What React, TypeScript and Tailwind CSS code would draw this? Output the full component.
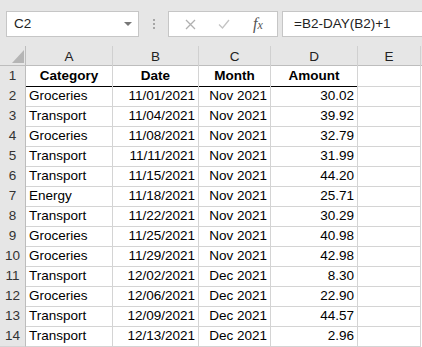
import React from "react";

const rows: [string, string, string, string][] = [
  ["Groceries", "11/01/2021", "Nov 2021", "30.02"],
  ["Transport", "11/04/2021", "Nov 2021", "39.92"],
  ["Groceries", "11/08/2021", "Nov 2021", "32.79"],
  ["Transport", "11/11/2021", "Nov 2021", "31.99"],
  ["Transport", "11/15/2021", "Nov 2021", "44.20"],
  ["Energy", "11/18/2021", "Nov 2021", "25.71"],
  ["Transport", "11/22/2021", "Nov 2021", "30.29"],
  ["Groceries", "11/25/2021", "Nov 2021", "40.98"],
  ["Groceries", "11/29/2021", "Nov 2021", "42.98"],
  ["Transport", "12/02/2021", "Dec 2021", "8.30"],
  ["Groceries", "12/06/2021", "Dec 2021", "22.90"],
  ["Transport", "12/09/2021", "Dec 2021", "44.57"],
  ["Transport", "12/13/2021", "Dec 2021", "2.96"],
];

const cols = "grid grid-cols-[26px_87px_86px_72px_87px_63px]";

export default function App() {
  return (
    <div
      className="w-[422px] h-[347px] overflow-hidden bg-white text-[13.5px] text-black"
      style={{ fontFamily: '"Liberation Sans", Arial, sans-serif' }}
    >
      {/* Toolbar */}
      <div className="h-[46px] bg-[#e6e6e6] flex items-start pt-[11px] pl-[6px]">
        <div className="w-[133px] h-[26px] bg-white border border-[#c6c6c6] flex items-center pl-[7px] pr-[6px]">
          <span className="flex-1 text-[#222]">C2</span>
          <svg width="8" height="5" viewBox="0 0 8 5">
            <polygon points="0,0 8,0 4,4" fill="#777" />
          </svg>
        </div>
        <div className="w-[29px] h-[26px] flex flex-col items-center justify-center gap-[2px]">
          <div className="w-[2px] h-[2px] bg-[#a6a6a6]" />
          <div className="w-[2px] h-[2px] bg-[#a6a6a6]" />
          <div className="w-[2px] h-[2px] bg-[#a6a6a6]" />
        </div>
        <div className="w-[110px] h-[26px] bg-white border border-[#c6c6c6] flex items-center">
          <div className="w-[38px] flex justify-center pl-[4px]">
            <svg width="11" height="11" viewBox="0 0 11 11">
              <path d="M1 1 L10 10 M10 1 L1 10" stroke="#b0b0b0" strokeWidth="1.3" fill="none" />
            </svg>
          </div>
          <div className="w-[34px] flex justify-center">
            <svg width="12" height="10" viewBox="0 0 12 10">
              <path d="M1 5.5 L4.5 9 L11 1" stroke="#c4c4c4" strokeWidth="1.3" fill="none" />
            </svg>
          </div>
          <div
            className="w-[34px] flex justify-center items-baseline italic text-[#555] text-[16px] leading-none"
            style={{ fontFamily: '"Liberation Serif", "Times New Roman", serif' }}
          >
            f<span className="text-[12px]">x</span>
          </div>
        </div>
        <div className="ml-[4px] flex-1 h-[26px] bg-white border-y border-l border-[#c6c6c6] flex items-center pl-[11px] text-[#222]">
          =B2-DAY(B2)+1
        </div>
      </div>

      {/* Column headers */}
      <div className={`${cols} h-[20px] bg-[#e6e6e6] border-b border-[#bdbdbd]`}>
        <div className="relative border-r border-[#bdbdbd]">
          <svg className="absolute left-[12px] top-[4px]" width="12" height="13" viewBox="0 0 12 13">
            <polygon points="12,0 12,13 0,13" fill="#b5b5b5" />
          </svg>
        </div>
        {["A", "B", "C", "D", "E"].map((c) => (
          <div key={c} className="flex items-center justify-center border-r border-[#d0d0d0] text-[#222] pt-[1px]">
            {c}
          </div>
        ))}
      </div>

      {/* Header row 1 */}
      <div className={`${cols} h-[20px]`}>
        <div className="bg-[#e6e6e6] border-r border-b border-[#bdbdbd] border-b-[#d4d4d4] flex items-center justify-center text-[#333]">
          1
        </div>
        {["Category", "Date", "Month", "Amount"].map((h) => (
          <div key={h} className="font-bold flex items-center justify-center border-r border-[#d4d4d4] border-b border-b-black">
            {h}
          </div>
        ))}
        <div className="border-r border-b border-[#d4d4d4]" />
      </div>

      {rows.map((r, i) => (
        <div key={i} className={`${cols} h-[20px]`}>
          <div className="bg-[#e6e6e6] border-r border-b border-[#bdbdbd] border-b-[#d4d4d4] flex items-center justify-center text-[#333]">
            {i + 2}
          </div>
          <div className="flex items-center pl-[3px] border-r border-b border-[#d4d4d4] whitespace-nowrap">{r[0]}</div>
          <div className="flex items-center justify-end pr-[3px] border-r border-b border-[#d4d4d4]">{r[1]}</div>
          <div className="flex items-center justify-end pr-[3px] border-r border-b border-[#d4d4d4]">{r[2]}</div>
          <div className="flex items-center justify-end pr-[3px] border-r border-b border-[#d4d4d4]">{r[3]}</div>
          <div className="border-r border-b border-[#d4d4d4]" />
        </div>
      ))}
    </div>
  );
}
